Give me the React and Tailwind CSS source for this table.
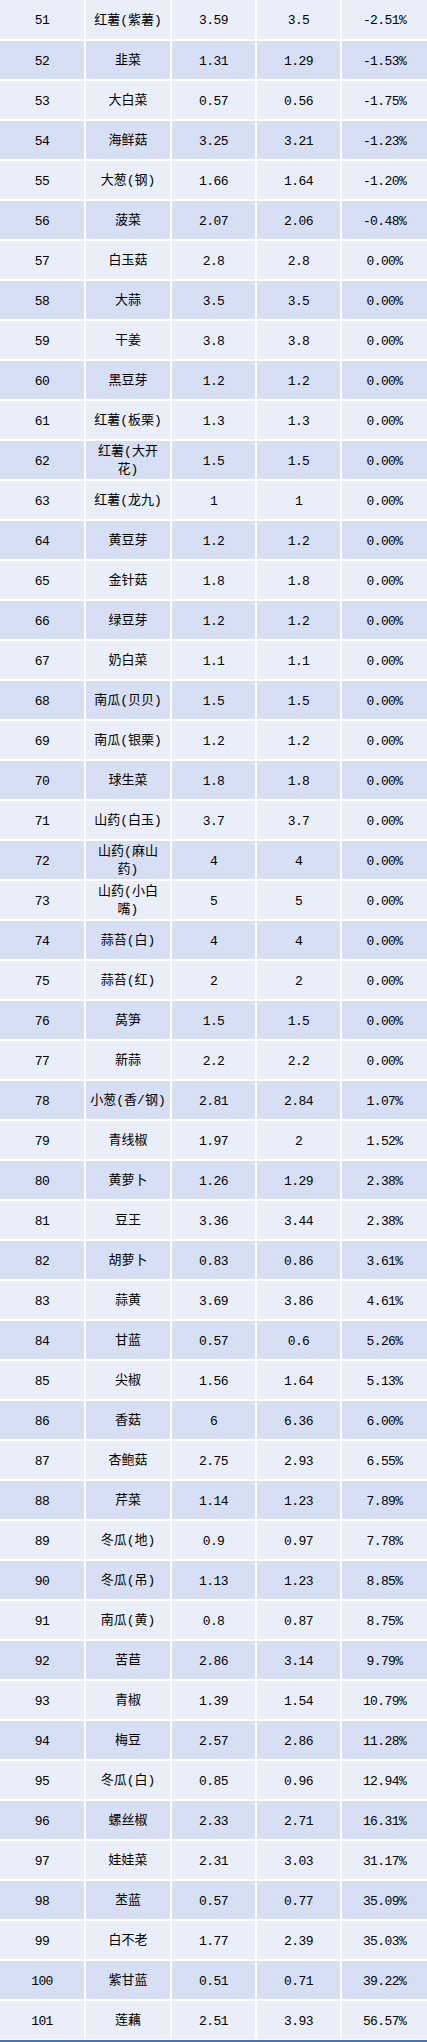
const rows = [
  [51, '红薯(紫薯)', '3.59', '3.5', '-2.51%'],
  [52, '韭菜', '1.31', '1.29', '-1.53%'],
  [53, '大白菜', '0.57', '0.56', '-1.75%'],
  [54, '海鲜菇', '3.25', '3.21', '-1.23%'],
  [55, '大葱(钢)', '1.66', '1.64', '-1.20%'],
  [56, '菠菜', '2.07', '2.06', '-0.48%'],
  [57, '白玉菇', '2.8', '2.8', '0.00%'],
  [58, '大蒜', '3.5', '3.5', '0.00%'],
  [59, '干姜', '3.8', '3.8', '0.00%'],
  [60, '黑豆芽', '1.2', '1.2', '0.00%'],
  [61, '红薯(板栗)', '1.3', '1.3', '0.00%'],
  [62, '红薯(大开花)', '1.5', '1.5', '0.00%'],
  [63, '红薯(龙九)', '1', '1', '0.00%'],
  [64, '黄豆芽', '1.2', '1.2', '0.00%'],
  [65, '金针菇', '1.8', '1.8', '0.00%'],
  [66, '绿豆芽', '1.2', '1.2', '0.00%'],
  [67, '奶白菜', '1.1', '1.1', '0.00%'],
  [68, '南瓜(贝贝)', '1.5', '1.5', '0.00%'],
  [69, '南瓜(银栗)', '1.2', '1.2', '0.00%'],
  [70, '球生菜', '1.8', '1.8', '0.00%'],
  [71, '山药(白玉)', '3.7', '3.7', '0.00%'],
  [72, '山药(麻山药)', '4', '4', '0.00%'],
  [73, '山药(小白嘴)', '5', '5', '0.00%'],
  [74, '蒜苔(白)', '4', '4', '0.00%'],
  [75, '蒜苔(红)', '2', '2', '0.00%'],
  [76, '莴笋', '1.5', '1.5', '0.00%'],
  [77, '新蒜', '2.2', '2.2', '0.00%'],
  [78, '小葱(香/钢)', '2.81', '2.84', '1.07%'],
  [79, '青线椒', '1.97', '2', '1.52%'],
  [80, '黄萝卜', '1.26', '1.29', '2.38%'],
  [81, '豆王', '3.36', '3.44', '2.38%'],
  [82, '胡萝卜', '0.83', '0.86', '3.61%'],
  [83, '蒜黄', '3.69', '3.86', '4.61%'],
  [84, '甘蓝', '0.57', '0.6', '5.26%'],
  [85, '尖椒', '1.56', '1.64', '5.13%'],
  [86, '香菇', '6', '6.36', '6.00%'],
  [87, '杏鲍菇', '2.75', '2.93', '6.55%'],
  [88, '芹菜', '1.14', '1.23', '7.89%'],
  [89, '冬瓜(地)', '0.9', '0.97', '7.78%'],
  [90, '冬瓜(吊)', '1.13', '1.23', '8.85%'],
  [91, '南瓜(黄)', '0.8', '0.87', '8.75%'],
  [92, '苦苣', '2.86', '3.14', '9.79%'],
  [93, '青椒', '1.39', '1.54', '10.79%'],
  [94, '梅豆', '2.57', '2.86', '11.28%'],
  [95, '冬瓜(白)', '0.85', '0.96', '12.94%'],
  [96, '螺丝椒', '2.33', '2.71', '16.31%'],
  [97, '娃娃菜', '2.31', '3.03', '31.17%'],
  [98, '苤蓝', '0.57', '0.77', '35.09%'],
  [99, '白不老', '1.77', '2.39', '35.03%'],
  [100, '紫甘蓝', '0.51', '0.71', '39.22%'],
  [101, '莲藕', '2.51', '3.93', '56.57%'],
];

const font = "font-['Liberation_Mono','Noto_Sans_CJK_SC',monospace]";
const num = 'flex items-center justify-center pt-[3px] text-[13px] tracking-[-0.6px]';

export default function App() {
  return (
    <div className={`w-[427px] bg-white text-black ${font}`}>
      <div className="flex flex-col gap-[2px]">
        {rows.map(([n, name, a, b, pct], i) => (
          <div
            key={n}
            className={`grid grid-cols-[84px_84px_83px_83px_1fr] gap-[2px] ${i === 0 ? 'h-[39px]' : 'h-[38px]'}`}
          >
            {[String(n), name, a, b, pct].map((v, j) => (
              <div
                key={j}
                className={`${i % 2 === 0 ? 'bg-[#e9eef9]' : 'bg-[#d6dff3]'} ${
                  j === 1
                    ? 'flex items-center justify-center px-[3px] pt-[2px] text-center text-[13px] leading-[18px]'
                    : num
                }`}
              >
                {v}
              </div>
            ))}
          </div>
        ))}
      </div>
      <div className="mt-px h-[2px] bg-[#4472c4]" />
    </div>
  );
}
